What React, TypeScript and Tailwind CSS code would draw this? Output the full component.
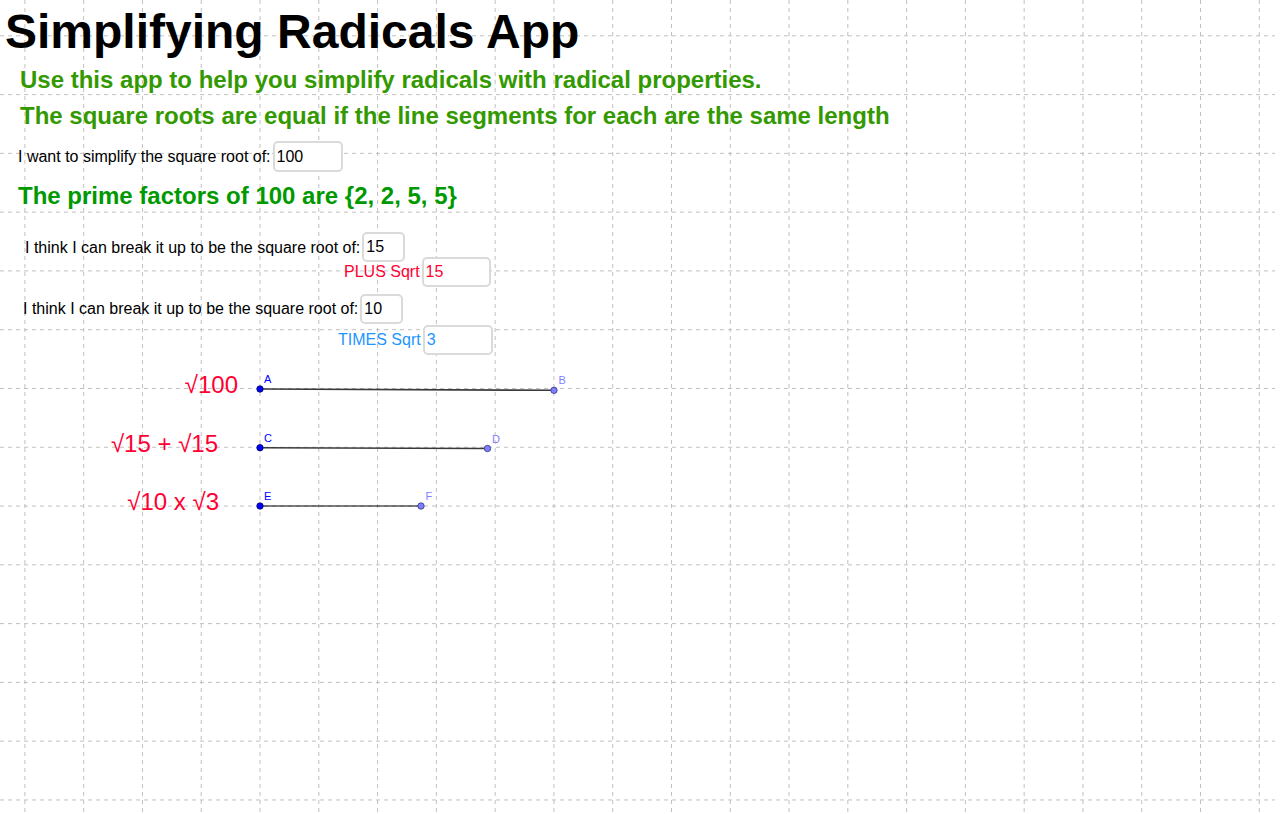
import React from 'react';

const GRID_X0 = 24.9;
const GRID_Y0 = 35.8;
const STEP = 58.78;

const vLines = Array.from({ length: 22 }, (_, i) => GRID_X0 + i * STEP).filter((x) => x < 1276);
const hLines = Array.from({ length: 14 }, (_, i) => GRID_Y0 + i * STEP).filter((y) => y < 812);

const GridBackground = () => (
  <svg className="absolute left-0 top-0" width={1280} height={814}>
    <g stroke="#c0c0c0" strokeWidth={1} strokeDasharray="4 4">
      {vLines.map((x) => (
        <line key={`v${x}`} x1={x} y1={0} x2={x} y2={812} />
      ))}
      {hLines.map((y) => (
        <line key={`h${y}`} x1={0} y1={y} x2={1275} y2={y} />
      ))}
    </g>
  </svg>
);

type Pt = { x: number; y: number; label: string; free: boolean };

// 29.4px per unit: sqrt(100), 2*sqrt(15), sqrt(30)
const segments: { a: Pt; b: Pt; w: number; color: string }[] = [
  {
    a: { x: 260, y: 389, label: 'A', free: true },
    b: { x: 554, y: 390.3, label: 'B', free: false },
    w: 1.6,
    color: '#3a3a3a',
  },
  {
    a: { x: 260, y: 447.7, label: 'C', free: true },
    b: { x: 487.5, y: 448.5, label: 'D', free: false },
    w: 1.4,
    color: '#3a3a3a',
  },
  {
    a: { x: 260, y: 506, label: 'E', free: true },
    b: { x: 421, y: 506, label: 'F', free: false },
    w: 1,
    color: '#000000',
  },
];

const Segments = () => (
  <svg className="absolute left-0 top-0" width={1280} height={814}>
    {segments.map(({ a, b, w, color }) => (
      <g key={a.label}>
        <line x1={a.x} y1={a.y} x2={b.x} y2={b.y} stroke={color} strokeWidth={w} />
        {[a, b].map((p) => (
          <g key={p.label}>
            <circle
              cx={p.x}
              cy={p.y}
              r={3.2}
              fill={p.free ? '#0000ff' : '#7f7fff'}
              stroke={p.free ? '#000066' : '#333380'}
              strokeWidth={0.8}
            />
            <text
              x={p.x + (p.free ? 4 : 4.5)}
              y={p.y - 6}
              fontSize={11}
              fontFamily="'Liberation Sans', Arial, sans-serif"
              fill={p.free ? '#0000ff' : '#7f7fff'}
            >
              {p.label}
            </text>
          </g>
        ))}
      </g>
    ))}
  </svg>
);

const Box = ({ className = '', value, color = 'text-black' }: { className?: string; value: string; color?: string }) => (
  <div
    className={`ml-[2px] flex h-[30px] items-center rounded-[5px] border-2 border-[#dadada] bg-white pl-[2px] text-[16px] leading-none ${color} ${className}`}
  >
    {value}
  </div>
);

const Row = ({ className, children }: { className: string; children: React.ReactNode }) => (
  <div className={`flex items-center whitespace-nowrap text-[16px] leading-none ${className}`}>{children}</div>
);

export default function App() {
  return (
    <div className="relative h-[814px] w-[1280px] overflow-hidden bg-white font-['Liberation_Sans',Arial,sans-serif]">
      <GridBackground />

      <div className="absolute left-0 top-[8px] flex flex-col items-start whitespace-nowrap">
        <h1 className="pl-[5px] text-[48px] font-bold leading-none text-black">Simplifying Radicals App</h1>
        <p className="mt-[12px] pl-[20px] text-[24px] font-bold leading-none text-[#339900]">
          Use this app to help you simplify radicals with radical properties.
        </p>
        <p className="mt-[11.7px] pl-[20px] text-[24px] font-bold leading-none text-[#339900]">
          The square roots are equal if the line segments for each are the same length
        </p>

        <Row className="mt-[13.6px] pl-[18px] text-black">
          <span>I want to simplify the square root of:</span>
          <Box className="h-[31px] w-[70px]" value="100" />
        </Row>

        <p className="mt-[11.4px] pl-[18px] text-[24px] font-bold leading-none text-[#009900]">
          The prime factors of 100 are {'{'}2, 2, 5, 5{'}'}
        </p>

        <Row className="mt-[24px] pl-[25px] text-black">
          <span className="pt-[2px]">I think I can break it up to be the square root of:</span>
          <Box className="w-[43px]" value="15" />
        </Row>
        <Row className="-mt-[5px] pl-[344px] text-[#ff0033]">
          <span>PLUS Sqrt</span>
          <Box className="w-[69px]" value="15" color="text-[#ff0033]" />
        </Row>

        <Row className="mt-[7.3px] pl-[23px] text-black">
          <span>I think I can break it up to be the square root of:</span>
          <Box className="w-[43px]" value="10" />
        </Row>
        <Row className="mt-[1px] pl-[338px] text-[#1e96ff]">
          <span>TIMES Sqrt</span>
          <Box className="w-[70px]" value="3" color="text-[#1e96ff]" />
        </Row>
      </div>

      <div className="absolute left-0 top-[373px] w-[238px] text-right text-[24px] leading-none text-[#ff0033]">√100</div>
      <div className="absolute left-0 top-[432px] w-[218px] text-right text-[24px] leading-none text-[#ff0033]">√15 + √15</div>
      <div className="absolute left-0 top-[490px] w-[219px] text-right text-[24px] leading-none text-[#ff0033]">√10 x √3</div>

      <Segments />
    </div>
  );
}
